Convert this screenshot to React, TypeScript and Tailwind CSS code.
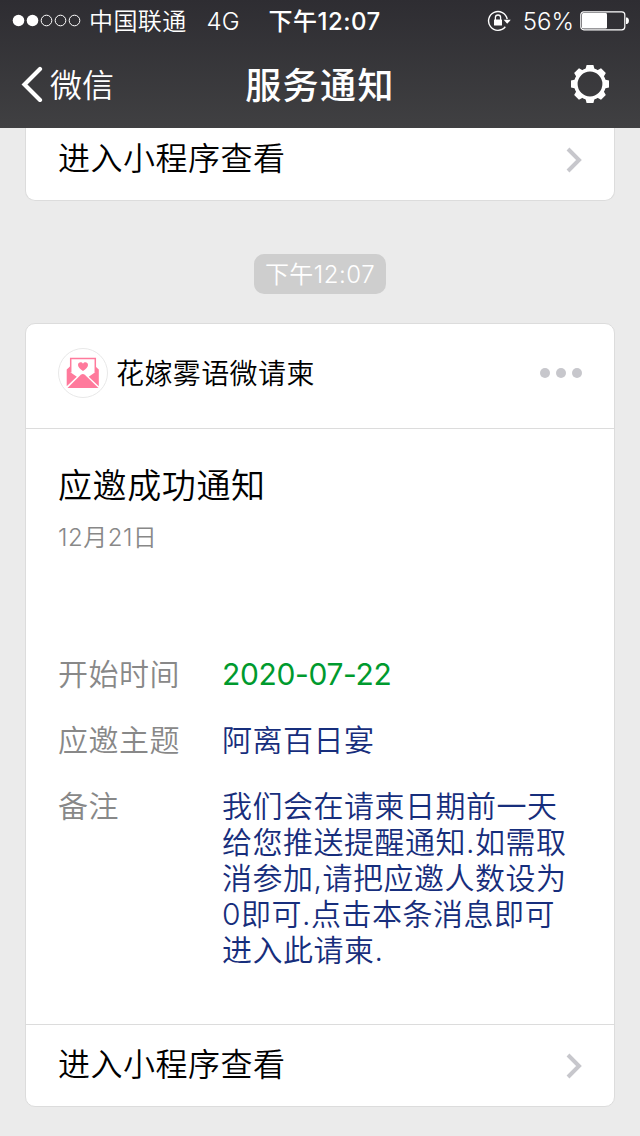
import { Fragment } from "react";

const FIELDS = [
  { label: "开始时间", value: ["2020-07-22"], color: "text-[#009a2e] font-normal tracking-[-0.35px]" },
  { label: "应邀主题", value: ["阿离百日宴"], color: "text-[#172e7c]" },
  {
    label: "备注",
    value: [
      "我们会在请柬日期前一天",
      "给您推送提醒通知.如需取",
      "消参加,请把应邀人数设为",
      "0即可.点击本条消息即可",
      "进入此请柬.",
    ],
    color: "text-[#172e7c]",
  },
];

function StatusBar() {
  return (
    <div className="h-10 flex items-center text-[24px] leading-10">
      <svg className="ml-3 shrink-0" width="70" height="14" viewBox="0 0 70 14">
        {[0, 1, 2, 3, 4].map((i) =>
          i < 2 ? (
            <circle key={i} cx={6.5 + i * 14} cy="7.5" r="5.8" fill="#fff" />
          ) : (
            <circle key={i} cx={6.5 + i * 14} cy="7.5" r="5.3" fill="none" stroke="#fff" strokeWidth="1" />
          )
        )}
      </svg>
      <span className="ml-[7px] pt-[3px] tracking-[0.4px]">中国联通</span>
      <span className="ml-5 pt-[3px]">4G</span>
      <span className="ml-[29px] pt-[3px] font-medium tracking-[0.5px]">下午12:07</span>

      <div className="ml-auto flex items-center pr-[10px]">
        <svg className="mt-px" width="24" height="22" viewBox="0 0 24 22" fill="none">
          <path d="M20.2 9.2A9.4 9.4 0 1 0 18.3 16.8" stroke="#fff" strokeWidth="1.4" />
          <path d="M16.6 9.8h7.2l-3.6 4z" fill="#fff" />
          <path d="M8.4 10V7.6a2.6 2.6 0 0 1 5.2 0V10" stroke="#fff" strokeWidth="1.3" />
          <rect x="7" y="9.6" width="8" height="6" rx="0.5" fill="#fff" />
        </svg>
        <span className="ml-3 pt-[3px]">56%</span>
        <svg className="ml-[6px] mt-px" width="50" height="20" viewBox="0 0 50 20" fill="none">
          <rect x="0.8" y="0.8" width="44" height="18" rx="3" stroke="#fff" strokeWidth="1.2" />
          <rect x="2" y="2" width="25" height="15.6" rx="1.4" fill="#fff" />
          <path d="M46 6.5h1.2q1.8 1 1.8 3.3t-1.8 3.3H46z" fill="#fff" />
        </svg>
      </div>
    </div>
  );
}

function NavBar() {
  return (
    <div className="h-[88px] grid grid-cols-[1fr_auto_1fr] items-center">
      <div className="flex items-center pl-[21px]">
        <svg width="22" height="36" viewBox="0 0 22 36" fill="none">
          <path d="M19 3 3.5 18.5 19 34" stroke="#fff" strokeWidth="4.2" strokeLinecap="round" />
        </svg>
        <span className="ml-[7px] pt-1 text-[32px] leading-[44px]">微信</span>
      </div>
      <h1 className="pt-1 text-[36px] leading-[44px] font-medium tracking-[1.4px]">服务通知</h1>
      <svg className="justify-self-end mr-[31px]" width="38" height="38" viewBox="-19 -19 38 38">
        <circle r="14.2" fill="none" stroke="#fff" strokeWidth="3.6" />
        {[0, 45, 90, 135, 180, 225, 270, 315].map((a) => (
          <path key={a} d="M-4.6-14.5L-3.4-19H3.4L4.6-14.5z" fill="#fff" transform={`rotate(${a})`} />
        ))}
      </svg>
    </div>
  );
}

function EnterRow() {
  return (
    <div className="h-[81px] shrink-0 flex items-center justify-between pb-[2px] pl-8 pr-8 text-black">
      <span className="text-[32px] leading-[44px] tracking-[0.5px]">进入小程序查看</span>
      <svg className="mt-[2px]" width="16" height="26" viewBox="0 0 16 26" fill="none">
        <path d="M2 2 13 13 2 24" stroke="#c7c7cc" strokeWidth="4" />
      </svg>
    </div>
  );
}

function EnvelopeLogo() {
  return (
    <svg width="50" height="50" viewBox="0 0 50 50">
      <circle cx="25" cy="25" r="24.5" fill="#fff" stroke="#e8e8e8" />
      {/* side flaps, letter, front flap, heart */}
      <path d="M8.7 21.5 12 18.5V24l6.8 4.7L8.7 38.2zM40.8 21.5 37.5 18.5V24l-6.8 4.7 10.1 9.5z" fill="#ff7a9c" />
      <path d="M12.7 24.5V10.5h24.6v14" fill="none" stroke="#ff7a9c" strokeWidth="1.5" />
      <path d="M9.5 40 22.8 26.8q2-1.6 4 0L40.5 40z" fill="#ff7a9c" />
      <path d="M25 23c-3-2-5-3.8-5-6 0-3.2 3.700-3.700 5-1.300 1.300-2.400 5-1.900 5 1.300 0 2.200-2 4-5 6z" fill="#ff7a9c" />
    </svg>
  );
}

export default function App() {
  return (
    <div className="w-[640px] h-[1136px] overflow-hidden bg-[#ebebeb] font-[350] font-[Inter,'Noto_Sans_CJK_SC',sans-serif]">
      <header className="h-32 bg-linear-to-b from-[#2e2d32] to-[#404042] text-white">
        <StatusBar />
        <NavBar />
      </header>

      <main>
        <div className="mx-[25px] h-[73px] flex flex-col justify-end bg-white border border-t-0 border-[#dcdcdc] rounded-b-[10px]">
          <EnterRow />
        </div>

        <div className="mt-[53px] flex justify-center">
          <span className="w-[132px] h-10 pt-px rounded-[10px] bg-[#cecece] text-white text-[24px] leading-10 text-center tracking-[0.5px]">
            下午12:07
          </span>
        </div>

        <section className="mt-[29px] mx-[25px] h-[784px] flex flex-col bg-white border border-[#dcdcdc] rounded-[10px] text-black">
          <div className="h-[105px] shrink-0 pt-6 pl-8 pr-8 flex items-start border-b border-[#dcdcdc]">
            <EnvelopeLogo />
            <span className="ml-2 pt-px text-[28px] leading-[50px] tracking-[0.4px]">花嫁雾语微请柬</span>
            <div className="ml-auto mt-5 flex gap-[6px]">
              <i className="size-[10px] rounded-full bg-[#c7c7cc]" />
              <i className="size-[10px] rounded-full bg-[#c7c7cc]" />
              <i className="size-[10px] rounded-full bg-[#c7c7cc]" />
            </div>
          </div>

          <div className="flex-1 pl-8 pt-[33px]">
            <h2 className="text-[34px] leading-[48px] tracking-[0.6px]">应邀成功通知</h2>
            <p className="mt-[10px] text-[24px] leading-9 tracking-[0.5px] text-[#888]">12月21日</p>
            <dl className="mt-[100px] grid grid-cols-[164px_1fr] gap-y-[30px] text-[30px] leading-9 tracking-[0.5px]">
              {FIELDS.map((f) => (
                <Fragment key={f.label}>
                  <dt className="text-[#888]">{f.label}</dt>
                  <dd className={f.color}>
                    {f.value.map((line) => (
                      <div key={line} className="whitespace-nowrap">{line}</div>
                    ))}
                  </dd>
                </Fragment>
              ))}
            </dl>
          </div>

          <div className="border-t border-[#dcdcdc]">
            <EnterRow />
          </div>
        </section>
      </main>
    </div>
  );
}
